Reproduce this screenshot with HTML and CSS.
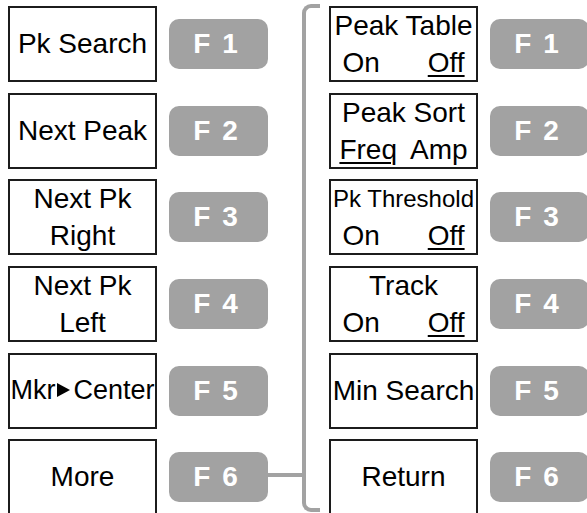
FILE: index.html
```html
<!DOCTYPE html>
<html lang="en">
<head>
  <meta charset="UTF-8">
  <meta name="viewport" content="width=device-width, initial-scale=1.0">
  <title>Peak Search Menu</title>
  <link rel="stylesheet" href="styles.css">
</head>
<body>
  <div class="panel">
    <!-- main peak menu -->
    <div class="menu">
      <div class="row">
        <div class="soft">Pk Search</div>
        <div class="fkey"><span>F</span><span>1</span></div>
      </div>
      <div class="row">
        <div class="soft">Next Peak</div>
        <div class="fkey"><span>F</span><span>2</span></div>
      </div>
      <div class="row">
        <div class="soft two">
          <div>Next Pk</div>
          <div>Right</div>
        </div>
        <div class="fkey"><span>F</span><span>3</span></div>
      </div>
      <div class="row">
        <div class="soft two">
          <div>Next Pk</div>
          <div>Left</div>
        </div>
        <div class="fkey"><span>F</span><span>4</span></div>
      </div>
      <div class="row">
        <div class="soft mkr">Mkr<span class="arrow"></span>Center</div>
        <div class="fkey"><span>F</span><span>5</span></div>
      </div>
      <div class="row">
        <div class="soft">More</div>
        <div class="fkey"><span>F</span><span>6</span></div>
      </div>
    </div>

    <div class="link">
      <div class="stub"><div class="stub-line"></div></div>
      <div class="bracket"></div>
    </div>

    <!-- "More" sub menu -->
    <div class="menu">
      <div class="row">
        <div class="soft two">
          <div>Peak Table</div>
          <div class="opts"><span>On</span><span class="sel">Off</span></div>
        </div>
        <div class="fkey"><span>F</span><span>1</span></div>
      </div>
      <div class="row">
        <div class="soft two">
          <div>Peak Sort</div>
          <div class="opts tight"><span class="sel">Freq</span><span>Amp</span></div>
        </div>
        <div class="fkey"><span>F</span><span>2</span></div>
      </div>
      <div class="row">
        <div class="soft two">
          <div class="small">Pk Threshold</div>
          <div class="opts"><span>On</span><span class="sel">Off</span></div>
        </div>
        <div class="fkey"><span>F</span><span>3</span></div>
      </div>
      <div class="row">
        <div class="soft two">
          <div>Track</div>
          <div class="opts"><span>On</span><span class="sel">Off</span></div>
        </div>
        <div class="fkey"><span>F</span><span>4</span></div>
      </div>
      <div class="row">
        <div class="soft">Min Search</div>
        <div class="fkey"><span>F</span><span>5</span></div>
      </div>
      <div class="row">
        <div class="soft">Return</div>
        <div class="fkey"><span>F</span><span>6</span></div>
      </div>
    </div>
  </div>
</body>
</html>
```

FILE: styles.css
```css
/* Soft key menu diagram */
body {
  margin: 0;
  background: white;
  overflow: hidden;
  font-family: "Liberation Sans", Arial, sans-serif;
  color: #000;
}
.panel {
  display: flex;
  align-items: flex-start;
  height: 513px;
  box-sizing: border-box;
  padding: 6px 0 0 8px;
  overflow: hidden;
}
.menu {
  flex: none;
  display: flex;
  flex-direction: column;
  gap: 10.67px;
}
.row {
  display: flex;
  align-items: center;
  gap: 12px;
}
.soft {
  width: 149px;
  height: 76px;
  flex: none;
  box-sizing: border-box;
  border: 2px solid #1c1c1c;
  display: flex;
  flex-direction: column;
  justify-content: center;
  align-items: center;
  font-size: 28px;
  white-space: nowrap;
}
.soft.two {
  line-height: 37px;
}
.soft .small {
  font-size: 24px;
}
.soft.mkr {
  flex-direction: row;
  font-size: 27px;
}
.arrow {
  width: 0;
  height: 0;
  margin: 0 3px 1px 2px;
  border-left: 13px solid #000;
  border-top: 7px solid transparent;
  border-bottom: 7px solid transparent;
}
.opts {
  display: flex;
  gap: 48px;
}
.opts.tight {
  gap: 13px;
}
.sel {
  text-decoration: underline;
  text-decoration-thickness: 2px;
  text-underline-offset: 3px;
}
.fkey {
  width: 99px;
  height: 50px;
  flex: none;
  border-radius: 10px;
  background-color: #a2a2a2;
  color: white;
  font-weight: bold;
  font-size: 28px;
  display: flex;
  justify-content: center;
  align-items: center;
  gap: 12px;
  padding-right: 6px;
  box-sizing: border-box;
}
.link {
  flex: none;
  display: flex;
  width: 61px;
  height: 508px;
  margin-top: -2px;
}
.stub {
  width: 34px;
  display: flex;
  flex-direction: column;
  justify-content: flex-end;
  padding-bottom: 35px;
}
.stub-line {
  height: 4px;
  background-color: #a2a2a2;
}
.bracket {
  width: 18px;
  box-sizing: border-box;
  border: 4px solid #a2a2a2;
  border-right: none;
  border-radius: 9px 0 0 9px;
}
```
